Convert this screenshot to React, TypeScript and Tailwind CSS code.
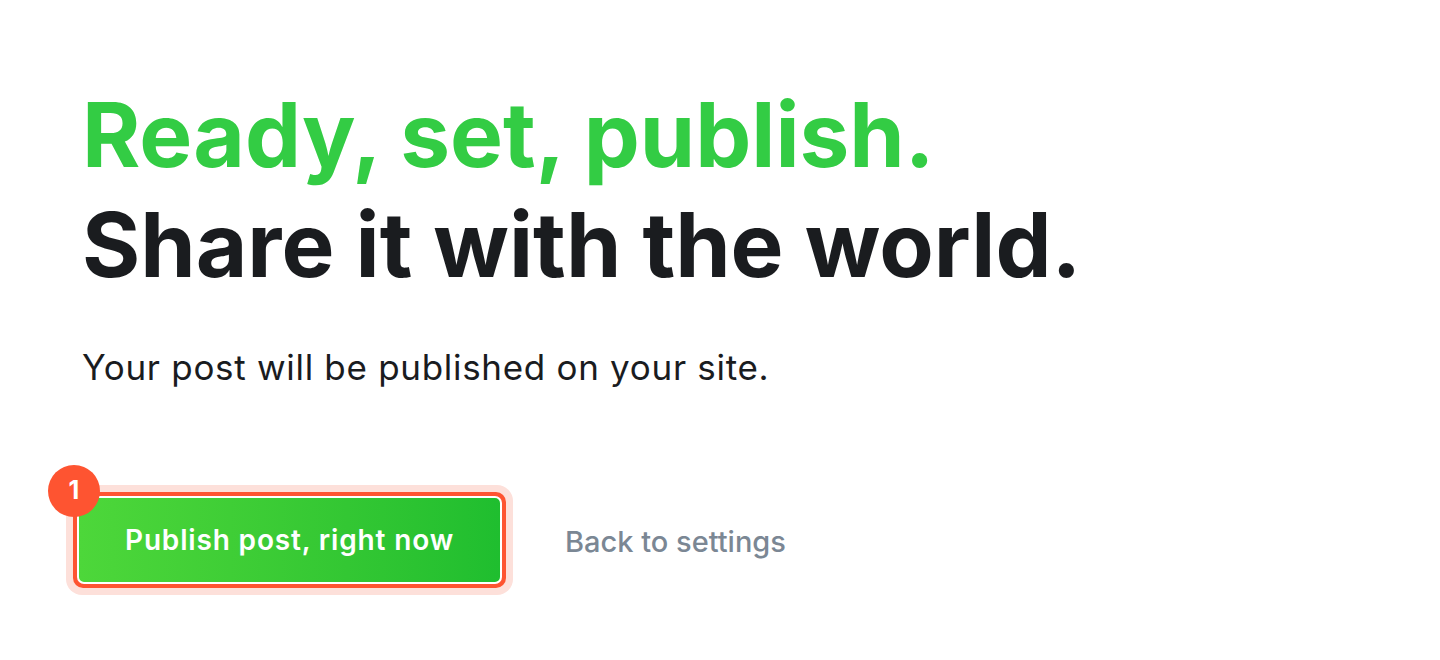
import React from 'react';

export default function App() {
  return (
    <div className="min-h-screen w-full bg-white font-['Inter','Liberation_Sans',sans-serif]">
      <div className="pl-[82px] pt-[80px]">
        {/* Headline */}
        <h1 className="text-[89px] font-bold leading-[110px] tracking-normal">
          <span className="block text-[#33cc44]">Ready, set, publish.</span>
          <span className="block text-[#1a1c1f]">Share it with the world.</span>
        </h1>

        <p className="mt-[45px] text-[35px] leading-[44px] tracking-[0.02em] text-[#1a1c1f]">
          Your post will be published on your site.
        </p>

        {/* Actions */}
        <div className="mt-[96px] flex items-center gap-[52px]">
          <div className="relative -ml-[16px]">
            <div className="rounded-[16px] bg-[#fde0da] p-[7px]">
              <div className="rounded-[10px] bg-[#fe5431] p-[4px]">
                <button className="flex h-[88px] w-[425px] items-center justify-center rounded-[7px] border-2 border-white bg-gradient-to-r from-[#4dd73a] to-[#1fbe2f] text-[28px] font-semibold tracking-[0.03em] text-white">
                  Publish post, right now
                </button>
              </div>
            </div>
            <span className="absolute -left-[18px] -top-[20px] flex h-[52px] w-[52px] items-center justify-center rounded-full bg-[#fe5431] text-[25px] font-bold text-white">
              1
            </span>
          </div>
          <a href="#" className="mt-[3px] text-[29px] font-medium tracking-normal text-[#7b8794]">
            Back to settings
          </a>
        </div>
      </div>
    </div>
  );
}
